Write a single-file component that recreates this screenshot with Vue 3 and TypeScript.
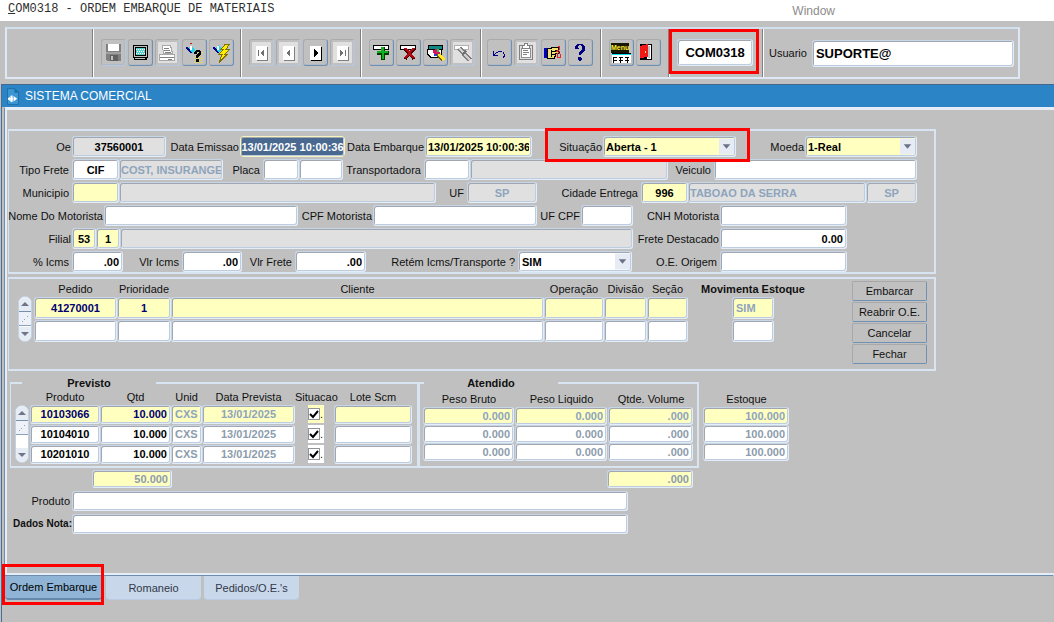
<script setup lang="ts">
import { reactive, ref } from 'vue'

interface Cell {
  kind: 'label' | 'field' | 'select'
  id?: string
  text?: string
  tone?: string
  align?: string
  flagged?: boolean
}

const label = (text: string, id: string): Cell => ({ kind: 'label', text, id })
const field = (id: string, text = '', tone = '', align = ''): Cell => ({ kind: 'field', id, text, tone, align })
const select = (id: string, text: string, tone = '', flagged = false): Cell => ({ kind: 'select', id, text, tone, flagged })

const rows = reactive<Cell[][]>([
  [
    label('Oe', 'oe'), field('oe', '37560001', 'locked', 'center'),
    label('Data Emissao', 'emissao'), field('emissao', '13/01/2025 10:00:36', 'picked', 'center'),
    label('Data Embarque', 'embarque'), field('embarque', '13/01/2025 10:00:36', 'key', 'start'),
    label('Situação', 'situacao'), select('situacao', 'Aberta - 1', 'key', true),
    label('Moeda', 'moeda'), select('moeda', '1-Real', 'key'),
  ],
  [
    label('Tipo Frete', 'frete'), field('frete', 'CIF', '', 'center'), field('fretedesc', 'COST, INSURANGE', 'locked faded tight', 'start'),
    label('Placa', 'placa'), field('placa'), field('placauf'),
    label('Transportadora', 'transp'), field('transp'), field('transpnome', '', 'locked'),
    label('Veiculo', 'veiculo'), field('veiculo'),
  ],
  [
    label('Municipio', 'municipio'), field('municipio', '', 'key'), field('municipionome', '', 'locked'),
    label('UF', 'uf'), field('uf', 'SP', 'locked faded', 'center'),
    label('Cidade Entrega', 'cidade'), field('cidade', '996', 'key', 'center'),
    field('cidadenome', 'TABOAO DA SERRA', 'locked faded tight', 'start'), field('cidadeuf', 'SP', 'locked faded', 'center'),
  ],
  [
    label('Nome Do Motorista', 'motorista'), field('motorista'),
    label('CPF Motorista', 'cpf'), field('cpf'),
    label('UF CPF', 'ufcpf'), field('ufcpf'),
    label('CNH Motorista', 'cnh'), field('cnh'),
  ],
  [
    label('Filial', 'filial'), field('filial', '53', 'key', 'center'), field('filialsub', '1', 'key', 'center'), field('filialnome', '', 'locked'),
    label('Frete Destacado', 'destacado'), field('destacado', '0.00', '', 'end'),
  ],
  [
    label('% Icms', 'icms'), field('icms', '.00', '', 'end'),
    label('Vlr Icms', 'vlricms'), field('vlricms', '.00', '', 'end'),
    label('Vlr Frete', 'vlrfrete'), field('vlrfrete', '.00', '', 'end'),
    label('Retém Icms/Transporte ?', 'retem'), select('retem', 'SIM'),
    label('O.E. Origem', 'origem'), field('origem'),
  ],
])

const pedidos = reactive([
  { pedido: '41270001', prioridade: '1', estoque: 'SIM' },
  { pedido: '', prioridade: '', estoque: '' },
])

const itens = reactive([
  { produto: '10103066', qtd: '10.000', unid: 'CXS', data: '13/01/2025', ok: true, lote: '', bruto: '0.000', liquido: '0.000', volume: '.000', estoque: '100.000' },
  { produto: '10104010', qtd: '10.000', unid: 'CXS', data: '13/01/2025', ok: true, lote: '', bruto: '0.000', liquido: '0.000', volume: '.000', estoque: '100.000' },
  { produto: '10201010', qtd: '10.000', unid: 'CXS', data: '13/01/2025', ok: true, lote: '', bruto: '0.000', liquido: '0.000', volume: '.000', estoque: '100.000' },
])

const actions = ['Embarcar', 'Reabrir O.E.', 'Cancelar', 'Fechar']
const tabs = ['Ordem Embarque', 'Romaneio', "Pedidos/O.E.'s"]
const activeTab = ref(0)
const programa = ref('COM0318')
const usuario = ref('SUPORTE@')
const totalQtd = ref('50.000')
const totalVolume = ref('.000')
const produto = ref('')
const dadosNota = ref('')
</script>

<template>
  <div class="app">
    <header class="menubar">
      <span class="caption"><u>C</u>OM0318 - ORDEM EMBARQUE DE MATERIAIS</span>
      <button class="menu" type="button">Window</button>
    </header>

    <div class="toolbar">
      <div class="group blank"></div>
      <div class="group g1">
        <button type="button" class="tool off" aria-label="Salvar">
          <svg viewBox="0 0 25 27"><path fill="#808080" d="M5 5h15v17H6l-1-1z" /><path fill="#fff" d="M7 5h11v7H7z" /><path fill="#a0a0a0" d="M5 13h15v2H5z" /><path fill="#606060" d="M9 16h8v6H9z" /><path fill="#c0c0c0" d="M10 17h2v4h-2z" /></svg>
        </button>
        <button type="button" class="tool" aria-label="Tela">
          <svg viewBox="0 0 25 27"><path fill="#000" d="M5 6h15v13h-1v2H6v-2H5z" /><path fill="#c0c0c0" d="M6 7h13v11H6z" /><path fill="#000" d="M7 8h11v9H7z" /><path fill="#58d0cc" d="M8 9h9v7H8z" /><path stroke="#fff" stroke-dasharray="1 1" d="M8 10.500h9M9 12.500h8M8 14.500h9" /><path fill="#c0c0c0" d="M7 19h10v1H7z" /></svg>
        </button>
        <button type="button" class="tool off pale" aria-label="Imprimir">
          <svg viewBox="0 0 25 27"><path fill="#fff" stroke="#a8a8a8" d="M7.500 6.500h8l2 8h-9zM4.500 15.500h15v6h-15z" /><path stroke="#808080" d="M9 9.500h5M9 11.500h6M10 13.500h6M5 18.500h14M13 20.500h4" /></svg>
        </button>
        <button type="button" class="tool" aria-label="Consultar">
          <svg viewBox="0 0 25 27"><path fill="#00008b" d="M4 8l4 1 3 4-3 1-3-3z" /><path fill="#20d8e8" d="M9 6l4 5-3 3-3-5z" /><path fill="#fff" d="M8 7h2v4H8z" /><path fill="#d01020" d="M8 4h2v1H8z" /><path stroke="#e8e040" stroke-dasharray="1 1" d="M14 13.500h7M15 15.500h6M13 17.500h8M12 19.500h9M13 21.500h8M12 23.500h9" /><path fill="#000" d="M12 15v-2l2-2h4l1 2v3l-3 2v1h-2v-3l3-2v-1h-2v2zM14 20h3v3h-3z" /></svg>
        </button>
        <button type="button" class="tool" aria-label="Executar consulta">
          <svg viewBox="0 0 25 27"><path fill="#00008b" d="M4 8l4 1 3 4-3 1-3-3z" /><path fill="#20d8e8" d="M9 6l4 4-3 4-3-5z" /><path fill="#fff" d="M8 7h2v4H8z" /><path fill="#ffee00" stroke="#807000" d="M16 5.500h4l-3 5h3l-4 5h2l-8 8 3-8h-3l4-5h-2z" /></svg>
        </button>
      </div>
      <div class="group g2">
        <button type="button" class="tool off pale" aria-label="Primeiro"><svg viewBox="0 0 25 27"><path fill="#808080" d="M8 21h10v-13h1v14H8z" /><path fill="#fff" d="M7 7h11v14H7z" /><path fill="#707070" d="M9 11h1v6H9zM15 11v6l-4-3z" /></svg></button>
        <button type="button" class="tool off pale" aria-label="Anterior"><svg viewBox="0 0 25 27"><path fill="#808080" d="M8 21h10v-13h1v14H8z" /><path fill="#fff" d="M7 7h11v14H7z" /><path fill="#707070" d="M14 11v6l-4-3z" /></svg></button>
        <button type="button" class="tool" aria-label="Próximo"><svg viewBox="0 0 25 27"><path fill="#000" d="M8 21h10v-13h1v14H8z" /><path fill="#fff" d="M7 7h11v14H7z" /><path fill="#000" d="M11 10l5 4-5 4z" /></svg></button>
        <button type="button" class="tool off pale" aria-label="Último"><svg viewBox="0 0 25 27"><path fill="#808080" d="M8 21h10v-13h1v14H8z" /><path fill="#fff" d="M7 7h11v14H7z" /><path fill="#707070" d="M10 11l4 3-4 3zM15 11h1v6h-1z" /></svg></button>
      </div>
      <div class="group g1">
        <button type="button" class="tool" aria-label="Inserir"><svg viewBox="0 0 25 27"><path fill="#fff" stroke="#000" d="M4.500 6.500h15v4h-15z" /><path fill="#003c00" d="M12 8h4v4h4v4h-4v5h-4v-5H8v-4h4z" /><path fill="#10b020" d="M12 8h3v4h4v2h-4v6h-2v-6H8v-2h4z" /></svg></button>
        <button type="button" class="tool" aria-label="Remover"><svg viewBox="0 0 25 27"><path fill="#fff" stroke="#000" d="M4.500 6.500h15v4h-15z" /><path fill="none" stroke="#500000" stroke-width="3" d="M9 10l9 10M18 10L9 20" /><path fill="none" stroke="#b00810" stroke-width="2" d="M9 9l9 10M18 9L9 19" /></svg></button>
        <button type="button" class="tool" aria-label="Limpar bloco"><svg viewBox="0 0 25 27"><path fill="#108888" stroke="#000" d="M5.500 6.500h14v4h-14z" /><path fill="#fff" stroke="#000" d="M4.500 10.500h14v8H8l-3-3z" /><path fill="#e01060" d="M10 11l4-1 3 4-3 3-4-3z" /><path fill="#20d040" d="M14 10h2v3h-2z" /><path fill="#2040e0" d="M11 15h3v2h-3z" /><path stroke="#706000" stroke-width="4" d="M15 15l5 6" /><path stroke="#ffe820" stroke-width="3" d="M16 15l5 6" /></svg></button>
        <button type="button" class="tool off pale" aria-label="Localizar"><svg viewBox="0 0 25 27"><path fill="#fff" stroke="#b0b0b0" d="M4.500 6.500h14v4h-14z" /><path stroke="#808080" stroke-width="5" d="M9 9l11 12" /><path stroke="#d0d0d0" stroke-width="2" d="M9 9l11 12" /><path stroke="#707070" stroke-width="2" d="M12 16l4-4" /></svg></button>
      </div>
      <div class="group g4">
        <button type="button" class="tool" aria-label="Desfazer"><svg viewBox="0 0 25 27"><path fill="#000080" d="M6 12h1v3h1v-1h1v-1h2v-1h4v1h2v2h1v3h-1v1h-1v-2h1v-2h-1v-2h-5v1H9v1H8v1h3v1H6z" /></svg></button>
        <button type="button" class="tool off pale" aria-label="Lista"><svg viewBox="0 0 25 27"><path fill="none" stroke="#808080" d="M5.500 6.500h13v14h-13z" /><path fill="#fff" stroke="#909090" d="M7.500 9.500h9v9h-9z" /><path fill="#fff" stroke="#808080" d="M8.500 6.500h2v-2h3v2h2v3h-7z" /><path stroke="#808080" d="M9 11.500h5M9 13.500h6M9 15.500h4" /></svg></button>
        <button type="button" class="tool" aria-label="Editar"><svg viewBox="0 0 25 27"><path fill="#0000c0" d="M3 9h3v10H3z" /><path fill="#f0e070" stroke="#000" d="M6.500 9.500h3l2-1h6v3h-3l4 1v2h-4v3h-1v2h-7z" /><path stroke="#000" d="M11 12.500h5M11 15.500h4M10 11v7" /><path fill="none" stroke="#f02020" d="M16.500 7.500h2v3l-3 2M19 12l-3 3v3h3v-3l-3-3" /></svg></button>
        <button type="button" class="tool" aria-label="Ajuda"><svg viewBox="0 0 25 27"><path fill="#000080" d="M7 10V7l3-2h4l3 2v4l-3 3-1 2h-2v-2l3-4V7l-2-1-2 1 1 3zM10 18h3l1 2-2 2-2-1z" /></svg></button>
      </div>
      <div class="group g2 last">
        <button type="button" class="tool menuicon" aria-label="Menu"><span>Menu</span><svg viewBox="0 0 25 27"><path stroke="#000" d="M3 14.500h19" /><path stroke="#00e0f0" d="M3 15.500h19" /><path fill="#fff" d="M3 16h19v8H3z" /><path stroke="#000" stroke-dasharray="4 2" d="M4 18.500h17M4 21.500h17" /><path fill="none" stroke="#000" stroke-dasharray="3 1" d="M4.500 18v6M11.500 18v6M18.500 18v6" /></svg></button>
        <button type="button" class="tool" aria-label="Sair"><svg viewBox="0 0 25 27"><path fill="#000" d="M4 5h12v16H4z" /><path fill="#c0c0c0" stroke="#fff" d="M11.500 6.500h3v13h-3z" /><path fill="#f01818" d="M4 7l8-2v13l-8 1z" /><path fill="#fff040" d="M9 12h1v2H9z" /></svg></button>
      </div>
      <div class="group code">
        <div class="flag"><input v-model="programa" class="field big center" aria-label="Programa"></div>
      </div>
      <div class="group user">
        <label for="usuario">Usuario</label>
        <input id="usuario" v-model="usuario" class="field big">
      </div>
    </div>

    <section class="window">
      <h1 class="titlebar">
        <svg viewBox="0 0 14 18"><path fill="#3b97d3" stroke="#1f6ba8" d="M.5.500h8l4 4v13H.5z" /><path fill="#1f6ba8" d="M8 0v5h5z" /><path fill="none" stroke="#fff" stroke-width="2" d="M5 8v7M1 11.500h3" /><circle cx="4" cy="11.500" r="2" fill="none" stroke="#fff" /><path fill="#fff" d="M7 8.500l4 3-4 3z" /></svg>
        SISTEMA COMERCIAL
      </h1>
      <div class="canvas">
        <form class="panel header" @submit.prevent>
          <div v-for="(row, i) in rows" :key="i" class="row" :class="'r' + (i + 1)">
            <template v-for="cell in row" :key="cell.kind + cell.id">
              <label v-if="cell.kind === 'label'" :for="cell.id">{{ cell.text }}</label>
              <div v-else-if="cell.kind === 'select'" class="combo" :class="{ flag: cell.flagged }">
                <select :id="cell.id" class="field" :class="cell.tone"><option>{{ cell.text }}</option></select>
                <svg viewBox="0 0 16 17"><path fill="#e6ebf4" d="M0 0h16v17H0z" /><path fill="#6a7288" d="M4 6h8l-4 5z" /></svg>
              </div>
              <input v-else :id="cell.id" v-model="cell.text" class="field" :class="[cell.tone, cell.align]" :aria-label="cell.id" :readonly="cell.tone?.includes('locked')">
            </template>
          </div>
        </form>

        <div class="panel orders">
          <div class="scroll">
            <button type="button" aria-label="Acima"><svg viewBox="0 0 8 4"><path d="M0 4l4-4 4 4z" /></svg></button>
            <span class="thumb"><svg viewBox="0 0 8 8"><path stroke="#8da5bd" d="M1 6.500h1M3 4.500h1M6 1.500h1" /></svg></span>
            <button type="button" aria-label="Abaixo"><svg viewBox="0 0 8 4"><path d="M0 0h8L4 4z" /></svg></button>
          </div>
          <table class="grid pedidos">
            <colgroup><col class="c83"><col class="c54"><col><col class="c60"><col class="c43"><col class="c41"><col class="c130"></colgroup>
            <thead><tr><th>Pedido</th><th>Prioridade</th><th>Cliente</th><th>Operação</th><th>Divisão</th><th>Seção</th><th class="strong">Movimenta Estoque</th></tr></thead>
            <tbody>
              <tr v-for="(p, i) in pedidos" :key="i" :class="{ current: i === 0 }">
                <td><input v-model="p.pedido" class="field center navy" aria-label="Pedido"></td>
                <td><input v-model="p.prioridade" class="field center navy" aria-label="Prioridade"></td>
                <td><input class="field" aria-label="Cliente"></td>
                <td><input class="field" aria-label="Operação"></td>
                <td><input class="field" aria-label="Divisão"></td>
                <td><input class="field" aria-label="Seção"></td>
                <td class="narrow"><input v-model="p.estoque" class="field faded" aria-label="Movimenta Estoque"></td>
              </tr>
            </tbody>
          </table>
          <div class="actions">
            <button v-for="a in actions" :key="a" type="button">{{ a }}</button>
          </div>
        </div>

        <div class="items">
          <fieldset class="box">
            <legend>Previsto</legend>
            <div class="scroll">
              <button type="button" aria-label="Acima"><svg viewBox="0 0 8 4"><path d="M0 4l4-4 4 4z" /></svg></button>
              <span class="thumb"><svg viewBox="0 0 8 8"><path stroke="#8da5bd" d="M1 6.500h1M3 4.500h1M6 1.500h1" /></svg></span>
              <button type="button" aria-label="Abaixo"><svg viewBox="0 0 8 4"><path d="M0 0h8L4 4z" /></svg></button>
            </div>
            <table class="grid previsto">
              <colgroup><col class="c70"><col class="c71"><col class="c31"><col class="c93"><col class="c39"><col></colgroup>
              <thead><tr><th>Produto</th><th>Qtd</th><th>Unid</th><th>Data Prevista</th><th>Situacao</th><th>Lote Scm</th></tr></thead>
              <tbody>
                <tr v-for="(it, i) in itens" :key="i" :class="{ current: i === 0 }">
                  <td><input v-model="it.produto" class="field center navy" aria-label="Produto"></td>
                  <td><input v-model="it.qtd" class="field end navy" aria-label="Qtd"></td>
                  <td><input v-model="it.unid" class="field faded" aria-label="Unid"></td>
                  <td><input v-model="it.data" class="field center faded" aria-label="Data Prevista"></td>
                  <td><label class="check"><input v-model="it.ok" type="checkbox" aria-label="Situacao"><svg viewBox="0 0 11 11"><path v-if="it.ok" fill="none" stroke="#000" stroke-width="2" d="M2 5l3 3 5-6" /></svg>.</label></td>
                  <td><input v-model="it.lote" class="field" aria-label="Lote Scm"></td>
                </tr>
              </tbody>
            </table>
          </fieldset>
          <fieldset class="box second">
            <legend>Atendido</legend>
            <table class="grid atendido">
              <colgroup><col class="c92"><col class="c93"><col></colgroup>
              <thead><tr><th>Peso Bruto</th><th>Peso Liquido</th><th>Qtde. Volume</th></tr></thead>
              <tbody>
                <tr v-for="(it, i) in itens" :key="i" :class="{ current: i === 0 }">
                  <td><input v-model="it.bruto" class="field end faded" aria-label="Peso Bruto"></td>
                  <td><input v-model="it.liquido" class="field end faded" aria-label="Peso Liquido"></td>
                  <td><input v-model="it.volume" class="field end faded" aria-label="Qtde. Volume"></td>
                </tr>
              </tbody>
            </table>
          </fieldset>
          <table class="grid atendido stock">
            <thead><tr><th>Estoque</th></tr></thead>
            <tbody>
              <tr v-for="(it, i) in itens" :key="i" :class="{ current: i === 0 }">
                <td><input v-model="it.estoque" class="field end faded" aria-label="Estoque"></td>
              </tr>
            </tbody>
          </table>
        </div>

        <div class="totals">
          <input v-model="totalQtd" class="field key faded end" aria-label="Total Qtd">
          <input v-model="totalVolume" class="field key faded end" aria-label="Total Volume">
        </div>

        <div class="notes">
          <label for="prod">Produto</label>
          <input id="prod" v-model="produto" class="field">
          <label for="nota" class="small">Dados Nota:</label>
          <input id="nota" v-model="dadosNota" class="field">
        </div>
      </div>

      <nav class="tabs" role="tablist">
        <button v-for="(t, i) in tabs" :key="t" type="button" role="tab" :aria-selected="activeTab === i" :class="{ active: activeTab === i, flag: i === 0 }" @click="activeTab = i">{{ t }}</button>
      </nav>
    </section>
  </div>
</template>

<style>
body { margin: 0; background: #c0c0c0; }
</style>

<style scoped>
.app {
  min-height: 100vh;
  display: flex;
  flex-direction: column;
  background: #c0c0c0;
  color: #101010;
  font: 11px/14px "Liberation Sans", Arial, sans-serif;
}
.app *, .app *::after { box-sizing: border-box; }
button { font: inherit; color: inherit; padding: 0; cursor: pointer; }
label { white-space: nowrap; }

.menubar {
  display: flex;
  justify-content: space-between;
  height: 21px;
  padding: 0 219px 0 8px;
  background: #fff;
}
.caption { font: 12px/18px "Liberation Mono", "Courier New", monospace; color: #303030; white-space: nowrap; }
.menu { border: 0; background: none; font-size: 12px; line-height: 18px; color: #8c8c8c; }

.toolbar {
  display: flex;
  height: 52px;
  margin: 6px 34px 5px 5px;
  border: 2px solid #dde8f4;
  border-top-color: #d2dfee;
}
.group {
  display: flex;
  flex: none;
  align-items: flex-start;
  gap: 2px;
  padding-top: 10px;
  border-right: 1px solid #fff;
  box-shadow: inset -1px 0 #808080;
}
.blank { width: 87px; }
.g1 { padding-left: 7px; padding-right: 6px; }
.g2 { padding-left: 7px; padding-right: 6px; }
.g4 { padding-left: 5px; padding-right: 8px; }
.g1:nth-child(2) { width: 148px; }
.group.last { width: 68px; }
.tool {
  position: relative;
  flex: none;
  width: 25px;
  height: 27px;
  border: 1px solid #a8aaae;
  border-right-color: #6f90b2;
  border-bottom-color: #6f90b2;
  border-radius: 3px;
  background: #c0c0c0;
  box-shadow: inset -1px -1px #b0bac6;
}
.tool.off { border-right-color: #b4c8e0; border-bottom-color: #b4c8e0; }
.tool.pale { background: #e0e0e0; box-shadow: inset 0 0 0 2px #c0c0c0; }
.tool svg { position: absolute; inset: -1px; width: 25px; height: 27px; fill: none; shape-rendering: crispEdges; }
.menuicon span {
  position: absolute;
  top: 3px;
  left: 1px;
  background: #181800;
  color: #fff030;
  font-size: 7px;
  font-weight: bold;
  line-height: 10px;
}
.code { width: 94px; padding-left: 7px; }
.code .flag { width: 76px; }
.user { flex: 1; border: 0; box-shadow: none; align-items: center; gap: 5px; padding: 0 4px 0 5px; }
.user .field { flex: 1; min-width: 0; }

.flag { position: relative; }
.flag::after { content: ""; position: absolute; z-index: 2; border: 3px solid #ff0000; pointer-events: none; }
.code .flag::after { inset: -10px -6px -8px -8px; }
.combo.flag::after { inset: -8px -14px -5px -58px; }
.tabs .flag::after { inset: -12px -2px -7px -3px; }

.field {
  display: block;
  width: 100%;
  height: 21px;
  margin: 0;
  padding: 0 3px;
  border: 1px solid #c6d5e8;
  border-right-color: #e4ecf6;
  border-bottom-color: #e4ecf6;
  border-radius: 3px;
  outline: 0;
  background: #fff;
  box-shadow: inset 1px 1px #a2a6ae, inset -1px -1px #bccde2;
  color: #000;
  font: bold 11px/14px "Liberation Sans", Arial, sans-serif;
}
.field.big { height: 27px; font-size: 13px; }
.field.locked { background: #e0e0e0; }
.field.key, .current .field { background: #ffffc0; }
.field.faded { color: #8c9cac; }
.current .field.faded, .locked.faded { color: #8ea4bc; }
.field.tight { padding: 0 1px; }
.center { text-align: center; }
.field.end { text-align: right; }
.current .navy { color: #000070; }

.window { flex: 1; margin-left: 1px; border-left: 1px solid #4a6c98; border-top: 1px solid #46668e; }
.titlebar {
  display: flex;
  align-items: center;
  gap: 5px;
  height: 22px;
  margin: 0;
  padding-left: 5px;
  background: #2b84c6;
  color: #fff;
  font-size: 12px;
  font-weight: normal;
}
.titlebar svg { width: 13px; height: 17px; }
.canvas {
  margin-left: 3px;
  min-height: 468px;
  padding: 19px 0 0 1px;
  border-style: solid;
  border-width: 3px 0 2px 2px;
  border-color: #e6edf6;
  box-shadow: -1px 1px #6d8db0;
}
.panel { margin-right: 118px; border: 2px solid #d8e4f2; border-left-width: 1px; }
.header { display: grid; row-gap: 2px; padding: 5px 17px 0 0; }
.row { display: grid; align-items: center; }
.row label { text-align: right; padding-right: 3px; justify-self: end; }
.r1 { grid-template-columns: 63px 94px 74px 105px 80px 107px 71px 133px 69px 1fr; }
.r2 { grid-template-columns: 63px 47px 104px 40px 36px 44px 81px 46px 1fr 46px 203px; }
.r3 { grid-template-columns: 63px 47px 1fr 31px 70px 104px 47px 178px 51px; }
.r4 { grid-template-columns: 95px 1fr 75px 164px 44px 52px 87px 127px; padding-right: 70px; }
.r5 { grid-template-columns: 63px 24px 24px 1fr 87px 127px; padding-right: 70px; }
.r6 { grid-template-columns: 63px 51px 59px 60px 53px 71px 152px 1fr 88px 127px; padding-right: 70px; }
.row.r1 label, .row.r4 label, .row.r5 label { padding-right: 1px; }
.r1 .field { padding: 0 2px; }
.field.picked { background: #4a6990; color: #fff; border-color: #f8f4c0; padding: 0; }
.combo { position: relative; }
.combo select { appearance: none; }
.combo svg { position: absolute; top: 2px; right: 2px; width: 15px; height: 17px; pointer-events: none; }

.orders { display: flex; margin-top: 3px; padding: 1px 7px 5px 9px; }
.scroll {
  display: flex;
  flex-direction: column;
  flex: none;
  width: 14px;
  border-radius: 7px;
  overflow: hidden;
  background: #fff;
  border: 1px solid #c2d2e6;
}
.scroll button { display: grid; place-items: center; height: 14px; border: 0; background: #e6ecf4; }
.scroll button:last-child { margin-top: auto; }
.scroll button svg { width: 8px; height: 4px; fill: #707488; }
.thumb { display: grid; place-items: center; height: 15px; border-top: 1px solid #7890a8; border-bottom: 1px solid #8aa2bc; background: #eef2f8; }
.thumb svg { width: 8px; height: 8px; }
.orders .scroll { height: 46px; margin: 16px 2px 0 0; }
.grid { border-collapse: collapse; table-layout: fixed; width: 100%; }
.grid th, .grid td { padding: 0; }
.grid th { font-weight: normal; white-space: nowrap; text-align: center; }
.grid th.strong { font-weight: bold; }
.pedidos { flex: 1; height: 62px; align-self: flex-start; }
.pedidos th { height: 17px; }
.pedidos td { height: 22px; }
.pedidos .field { height: 22px; }
.narrow .field { width: 42px; margin: 0 auto; }
.c31 { width: 31px; } .c39 { width: 39px; } .c41 { width: 41px; } .c43 { width: 43px; }
.c54 { width: 54px; } .c60 { width: 60px; } .c70 { width: 70px; } .c71 { width: 71px; }
.c83 { width: 83px; } .c92 { width: 92px; } .c93 { width: 93px; } .c130 { width: 130px; }
.actions { display: grid; gap: 1px; width: 75px; margin: 1px 0 0 34px; flex: none; }
.actions button {
  height: 20px;
  border: 1px solid #a6a8ac;
  border-right-color: #6f90b2;
  border-bottom-color: #6f90b2;
  border-radius: 2px;
  background: #c0c0c0;
}

.items { display: grid; grid-template-columns: 409fr 280fr 91fr; margin: 5px 264px 0 2px; align-items: start; }
.box {
  display: flex;
  min-width: 0;
  height: 92px;
  margin: 0;
  padding: 0 5px 0 4px;
  border: 2px solid #d8e4f2;
  border-left-width: 1px;
}
.box.second { padding: 0 3px; }
.box legend { width: 134px; margin-left: 7px; margin-right: auto; padding: 0; text-align: center; font-weight: bold; line-height: 14px; }
.box.second legend { margin-left: 1px; }
.box .scroll { height: 58px; margin: 15px 1px 0 0; }
.previsto, .atendido { align-self: flex-start; }
.previsto th { height: 14px; }
.previsto td { height: 20px; }
.previsto .field { height: 19px; }
.atendido th { height: 17px; }
.atendido td { height: 18px; }
.atendido .field { width: calc(100% - 1px); height: 18px; }
.stock { margin: 14px 0 0 4px; width: calc(100% - 4px); }
.check { display: flex; align-items: center; width: 16px; height: 18px; margin-left: 13px; background: #fff; position: relative; }
.current .check { background: #ffffc0; }
.check input { appearance: none; flex: none; width: 12px; height: 12px; margin: 0; background: #fff; border: 1px solid #909498; }
.check svg { position: absolute; left: 0; width: 11px; height: 11px; }

.totals { display: flex; justify-content: space-between; margin: 2px 361px 0 84px; }
.totals .field { width: 80px; height: 18px; }
.totals .field:last-child { width: 86px; }
.notes { display: grid; grid-template-columns: 64px 1fr; row-gap: 3px; align-items: center; margin: 3px 426px 0 0; }
.notes label { padding-right: 2px; text-align: right; }
.notes .small { font-size: 10px; font-weight: bold; padding-right: 0; }
.notes .field { height: 20px; }

.tabs { display: flex; gap: 3px; margin: 1px 0 0 3px; }
.tabs button {
  width: 95px;
  height: 24px;
  border: 0;
  border-bottom: 1px solid #b9cce4;
  border-radius: 0 0 4px 4px;
  background: #c9d7eb;
  color: #303848;
  white-space: nowrap;
}
.tabs .active { width: 97px; margin-right: 1px; background: #8fb4d6; color: #000; border-bottom: 2px solid #6688ac; }
</style>
